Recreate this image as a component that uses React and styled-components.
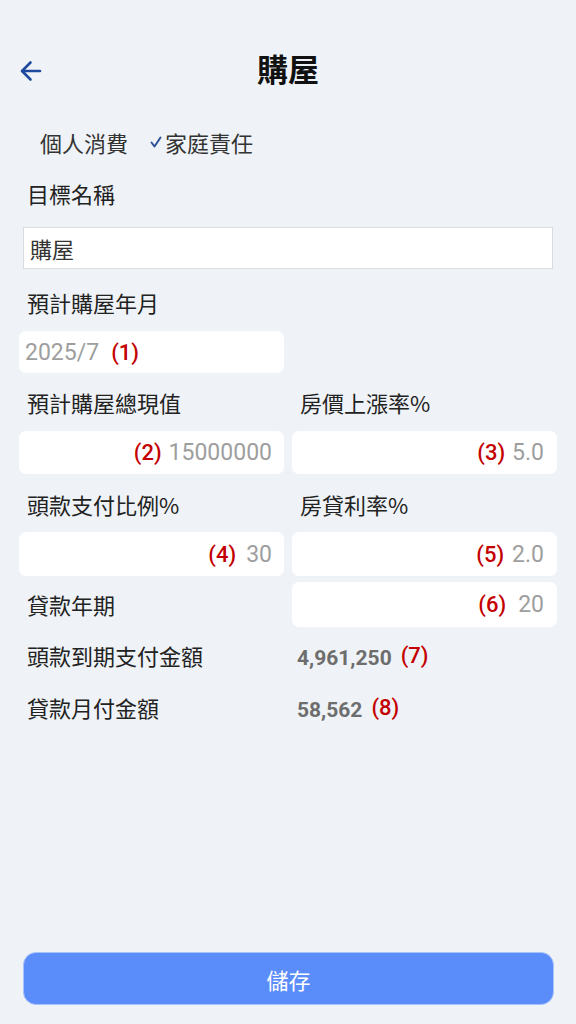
import React from "react";
import styled, { createGlobalStyle } from "styled-components";

const GlobalStyle = createGlobalStyle`
  html, body {
    margin: 0;
    padding: 0;
    background: #eff3f7;
  }
  body {
    font-family: Roboto, "Noto Sans CJK TC", sans-serif;
    color: #222;
  }
  * { box-sizing: border-box; }
`;

const Page = styled.div`
  min-height: 100vh;
  display: flex;
  flex-direction: column;
  padding: 44px 19px 19px;
`;

const Header = styled.div`
  display: grid;
  grid-template-columns: 48px 1fr 48px;
  align-items: center;
  height: 54px;
`;

const BackButton = styled.button`
  display: flex;
  align-items: center;
  background: none;
  border: none;
  padding: 0;
  cursor: pointer;
`;

const Title = styled.h1`
  margin: 0;
  text-align: center;
  font-family: "Noto Sans CJK TC", sans-serif;
  font-size: 31px;
  font-weight: 700;
  line-height: 48px;
  height: 54px;
  color: #111;
`;

const Toggles = styled.div`
  display: flex;
  align-items: center;
  gap: 22px;
  height: 30px;
  margin-top: 29px;
  margin-bottom: 3px;
  padding-left: 21px;
`;

const Toggle = styled.span`
  display: flex;
  align-items: center;
  gap: 3px;
  font-family: "Noto Sans CJK TC", sans-serif;
  font-size: 22px;
  line-height: 30px;
  color: #333;
`;

const Label = styled.div`
  font-family: "Noto Sans CJK TC", sans-serif;
  font-size: 22px;
  line-height: 24px;
  height: 30px;
  padding-left: 8px;
  color: #222;
  margin-top: ${({ $mt }) => $mt || 0}px;
`;

const TextInput = styled.div`
  margin: 16px 4px 0;
  height: 42px;
  background: #fff;
  border: 1px solid #dcdcdc;
  display: flex;
  align-items: center;
  padding-left: 6px;
  font-family: "Noto Sans CJK TC", sans-serif;
  font-size: 22px;
  color: #333;
`;

const Row = styled.div`
  display: grid;
  grid-template-columns: 1fr 1fr;
  column-gap: 8px;
  align-items: center;
  margin-top: ${({ $mt }) => $mt || 0}px;
`;

const Field = styled.div`
  height: ${({ $h }) => $h || 43}px;
  background: #fff;
  border-radius: 7px;
  display: flex;
  align-items: center;
  justify-content: ${({ $left }) => ($left ? "flex-start" : "flex-end")};
  padding: 0 ${({ $pr }) => $pr || 13}px 0 6px;
  gap: ${({ $gap }) => $gap || 7}px;
  font-size: 23px;
  color: #9e9e9e;
`;

const HalfField = styled(Field)`
  width: 265px;
  margin-top: 11px;
`;

const Marker = styled.span`
  color: #c40000;
  font-size: 22px;
  font-weight: 500;
`;

const Value = styled.div`
  display: flex;
  align-items: center;
  gap: 9px;
  padding-left: 5px;
  font-size: 21px;
  font-weight: 700;
  color: #6d6d6d;

  ${Marker} {
    position: relative;
    top: -3px;
  }
`;

const SaveButton = styled.button`
  margin-top: auto;
  margin-left: 4px;
  margin-right: 3px;
  height: 53px;
  border: 1px solid #a8c2fb;
  border-radius: 13px;
  background: #5a8cfa;
  color: #fff;
  font-family: "Noto Sans CJK TC", sans-serif;
  font-size: 22px;
  cursor: pointer;
`;

const Arrow = () => (
  <svg width="24" height="24" viewBox="0 0 24 24" fill="none">
    <path
      d="M21 12H3.5M11.5 3.5L3 12l8.5 8.5"
      stroke="#1d4a9e"
      strokeWidth="2.6"
      strokeLinecap="round"
      strokeLinejoin="round"
    />
  </svg>
);

const Check = () => (
  <svg width="12" height="12" viewBox="0 0 12 12" fill="none">
    <path
      d="M1.5 6.5L4.5 10.5L10.5 1.5"
      stroke="#2c4f96"
      strokeWidth="2"
      strokeLinecap="round"
      strokeLinejoin="round"
    />
  </svg>
);

export default function App() {
  return (
    <>
      <GlobalStyle />
      <Page>
        <Header>
          <BackButton aria-label="返回">
            <Arrow />
          </BackButton>
          <Title>購屋</Title>
          <span />
        </Header>

        <Toggles>
          <Toggle>個人消費</Toggle>
          <Toggle>
            <Check />
            家庭責任
          </Toggle>
        </Toggles>

        <Label $mt={21}>目標名稱</Label>
        <TextInput>購屋</TextInput>

        <Label $mt={21}>預計購屋年月</Label>
        <HalfField $h={42} $left $gap={12}>
          2025/7 <Marker>(1)</Marker>
        </HalfField>

        <Row $mt={17}>
          <Label>預計購屋總現值</Label>
          <Label>房價上漲率%</Label>
        </Row>
        <Row $mt={11}>
          <Field $pr={12}>
            <Marker>(2)</Marker>15000000
          </Field>
          <Field>
            <Marker>(3)</Marker>5.0
          </Field>
        </Row>

        <Row $mt={18}>
          <Label>頭款支付比例%</Label>
          <Label>房貸利率%</Label>
        </Row>
        <Row $mt={10}>
          <Field $h={44} $gap={10} $pr={12}>
            <Marker>(4)</Marker>30
          </Field>
          <Field $h={44} $gap={8}>
            <Marker>(5)</Marker>2.0
          </Field>
        </Row>

        <Row $mt={6}>
          <Label style={{ marginTop: 5 }}>貸款年期</Label>
          <Field $h={45} $gap={12}>
            <Marker>(6)</Marker>20
          </Field>
        </Row>

        <Row $mt={16}>
          <Label>頭款到期支付金額</Label>
          <Value>
            4,961,250<Marker>(7)</Marker>
          </Value>
        </Row>

        <Row $mt={22}>
          <Label>貸款月付金額</Label>
          <Value>
            58,562<Marker>(8)</Marker>
          </Value>
        </Row>

        <SaveButton>儲存</SaveButton>
      </Page>
    </>
  );
}
